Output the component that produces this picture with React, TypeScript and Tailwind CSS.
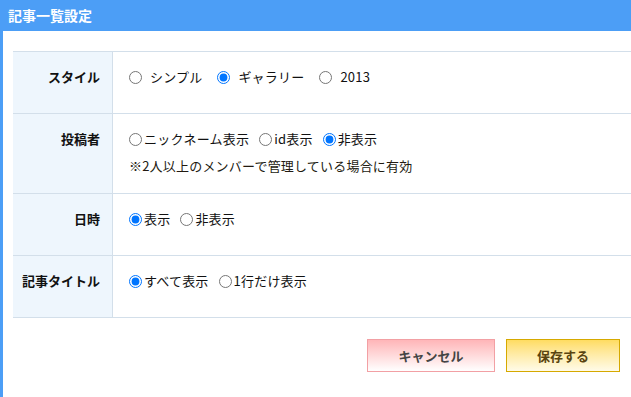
import React from 'react';

const font = { fontFamily: '"Noto Sans CJK JP", "Noto Sans", sans-serif' };

function Radio({ name, label, checked, wide }: { name: string; label: string; checked?: boolean; wide?: boolean }) {
  return (
    <label className={`flex items-center ${wide ? 'mr-[15px]' : 'mr-[10px]'}`}>
      <input
        type="radio"
        name={name}
        defaultChecked={checked}
        className={`w-[13px] h-[13px] m-0 accent-[#0075ff] ${wide ? 'mr-[8px]' : 'mr-[2px]'}`}
      />
      <span>{label}</span>
    </label>
  );
}

function Row({ label, height, children }: { label: string; height: string; children: React.ReactNode }) {
  return (
    <div className={`flex border-b border-[#d3dfea] ${height}`}>
      <div className="w-[100px] shrink-0 bg-[#eef6fd] border-r border-[#d3dfea] pt-[14px] pr-[12px] text-right font-bold leading-[22px]">
        {label}
      </div>
      <div className="flex-1 pt-[14px] pl-[16px] leading-[22px] tracking-[0.2px]">{children}</div>
    </div>
  );
}

export default function App() {
  return (
    <div className="w-[631px] h-[397px] bg-white text-[13px] text-[#111] overflow-hidden" style={font}>
      <div className="h-[31px] bg-[#4c9ef6] flex items-center px-[8px]">
        <h1 className="text-white font-bold text-[14px]">記事一覧設定</h1>
      </div>
      <div className="border-l-[3px] border-[#4c9ef6] h-[366px] pt-[20px] pl-[10px]">
        <div className="border-t border-[#d3dfea]">
          <Row label="スタイル" height="h-[62px]">
            <div className="flex">
              <Radio name="style" label="シンプル" wide />
              <Radio name="style" label="ギャラリー" checked wide />
              <Radio name="style" label="2013" wide />
            </div>
          </Row>
          <Row label="投稿者" height="h-[80px]">
            <div className="flex">
              <Radio name="author" label="ニックネーム表示" />
              <Radio name="author" label="id表示" />
              <Radio name="author" label="非表示" checked />
            </div>
            <p className="mt-[5px] text-[#221a10]">※2人以上のメンバーで管理している場合に有効</p>
          </Row>
          <Row label="日時" height="h-[62px]">
            <div className="flex">
              <Radio name="date" label="表示" checked />
              <Radio name="date" label="非表示" />
            </div>
          </Row>
          <Row label="記事タイトル" height="h-[62px]">
            <div className="flex">
              <Radio name="title" label="すべて表示" checked />
              <Radio name="title" label="1行だけ表示" />
            </div>
          </Row>
        </div>
        <div className="flex justify-end gap-[11px] mt-[21px] pr-[11px]">
          <button className="w-[128px] h-[33px] border border-[#f2a0a4] bg-gradient-to-b from-[#ffb5b8] to-white font-bold text-[#444] text-[13px]">
            キャンセル
          </button>
          <button className="w-[114px] h-[33px] border border-[#d6a900] bg-gradient-to-b from-[#ffdc60] to-[#fffbe8] font-bold text-[#5a4410] text-[13px]">
            保存する
          </button>
        </div>
      </div>
    </div>
  );
}
